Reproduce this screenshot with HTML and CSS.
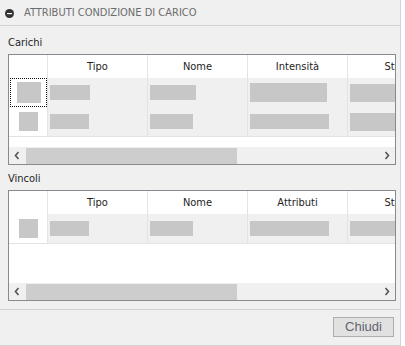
FILE: index.html
```html
<!DOCTYPE html>
<html>
<head>
    <meta charset="UTF-8">
    <title>Attributi condizione di carico</title>
    <link rel="stylesheet" href="styles.css">
</head>
<body>

<div class="panel">
    <div class="panel-head">
        <svg class="toggle" width="9" height="9" viewBox="0 0 9 9"><circle cx="4.5" cy="4.5" r="4.5" fill="#333"/><rect x="2" y="4" width="5" height="1.2" fill="#fff"/></svg>
        <span>ATTRIBUTI CONDIZIONE DI CARICO</span>
    </div>

    <div class="panel-body">
        <div class="label">Carichi</div>
        <div class="grid">
            <div class="grid-head">
                <div class="cell sel"></div>
                <div class="cell">Tipo</div>
                <div class="cell">Nome</div>
                <div class="cell">Intensità</div>
                <div class="cell">Stato</div>
            </div>
            <div class="grid-rows">
                <div class="grid-row">
                    <div class="cell sel"><div class="focus"><span class="ph ph-icon"></span></div></div>
                    <div class="cell"><span class="ph w40"></span></div>
                    <div class="cell"><span class="ph w46"></span></div>
                    <div class="cell"><span class="ph w77 tall"></span></div>
                    <div class="cell"><span class="ph w60 mid"></span></div>
                </div>
                <div class="grid-row">
                    <div class="cell sel"><span class="ph ph-sq"></span></div>
                    <div class="cell"><span class="ph w39"></span></div>
                    <div class="cell"><span class="ph w43"></span></div>
                    <div class="cell"><span class="ph w79"></span></div>
                    <div class="cell"><span class="ph w60 mid"></span></div>
                </div>
            </div>
            <div class="grid-space"></div>
            <div class="hscroll">
                <span class="arrow"><svg width="17" height="17" viewBox="0 0 17 17"><path d="M9.5 5 L6.5 8.5 L9.5 12" fill="none" stroke="#555" stroke-width="1.6"/></svg></span>
                <span class="thumb"></span>
                <span class="track"></span>
                <span class="arrow"><svg width="17" height="17" viewBox="0 0 17 17"><path d="M7.5 5 L10.5 8.5 L7.5 12" fill="none" stroke="#555" stroke-width="1.6"/></svg></span>
            </div>
        </div>

        <div class="label label-next">Vincoli</div>
        <div class="grid">
            <div class="grid-head">
                <div class="cell sel"></div>
                <div class="cell">Tipo</div>
                <div class="cell">Nome</div>
                <div class="cell">Attributi</div>
                <div class="cell">Stato</div>
            </div>
            <div class="grid-rows">
                <div class="grid-row">
                    <div class="cell sel"><span class="ph ph-sq"></span></div>
                    <div class="cell"><span class="ph w39"></span></div>
                    <div class="cell"><span class="ph w43"></span></div>
                    <div class="cell"><span class="ph w79"></span></div>
                    <div class="cell"><span class="ph w60"></span></div>
                </div>
            </div>
            <div class="grid-space"></div>
            <div class="hscroll">
                <span class="arrow"><svg width="17" height="17" viewBox="0 0 17 17"><path d="M9.5 5 L6.5 8.5 L9.5 12" fill="none" stroke="#555" stroke-width="1.6"/></svg></span>
                <span class="thumb"></span>
                <span class="track"></span>
                <span class="arrow"><svg width="17" height="17" viewBox="0 0 17 17"><path d="M7.5 5 L10.5 8.5 L7.5 12" fill="none" stroke="#555" stroke-width="1.6"/></svg></span>
            </div>
        </div>
    </div>

    <div class="panel-foot">
        <button class="btn">Chiudi</button>
    </div>
</div>

</body>
</html>
```

FILE: styles.css
```css
* {
    margin: 0;
    padding: 0;
    box-sizing: border-box;
}
body {
    width: 405px;
    height: 346px;
    background: #fff;
    font-family: "DejaVu Sans Condensed", "DejaVu Sans", sans-serif;
    font-size: 11px;
    color: #1e1e1e;
    overflow: hidden;
}
.panel {
    width: 401px;
    height: 346px;
    background: #f0f0f0;
    border-right: 1px solid #d2d2d2;
    border-bottom: 1px solid #d2d2d2;
    display: flex;
    flex-direction: column;
}
.panel-head {
    height: 26px;
    flex: 0 0 26px;
    border-bottom: 1px solid #d2d2d2;
    display: flex;
    align-items: center;
    padding-left: 5px;
    gap: 10px;
    color: #6c6c6c;
}
.toggle {
    display: block;
    margin-top: 1px;
}
.panel-body {
    flex: 1;
    padding: 10px 0 0 8px;
}
.label {
    line-height: 13px;
    height: 13px;
    margin-bottom: 5px;
}
.label-next {
    margin-top: 7px;
}

/* griglia */
.grid {
    width: 388px;
    height: 111px;
    border: 1px solid #868a91;
    background: #fff;
    display: flex;
    flex-direction: column;
    overflow: hidden;
}
.grid-head,
.grid-row {
    display: flex;
    overflow: hidden;
}
.grid-head {
    height: 23px;
    flex: 0 0 23px;
    line-height: 23px;
    text-align: center;
    white-space: nowrap;
}
.cell {
    flex: 0 0 100px;
    border-right: 1px solid #e3e3e3;
}
.cell.sel {
    flex-basis: 39px;
}
.grid-rows {
    border-bottom: 1px solid #e3e3e3;
}
.grid-row {
    height: 29px;
    background: #f0f0f0;
}
.grid-row .cell {
    display: flex;
    align-items: center;
    padding-left: 2px;
}
.grid-row .cell.sel {
    background: #fff;
    justify-content: center;
    padding-left: 0;
}
.focus {
    width: 37px;
    height: 29px;
    margin-left: 1px;
    border: 1px dotted #111;
    display: flex;
    align-items: center;
    justify-content: center;
}
.ph {
    display: block;
    height: 15px;
    background: #c6c7c6;
    flex-shrink: 0;
}
.ph-icon { width: 24px; height: 21px; }
.ph-sq { width: 19px; height: 19px; }
.w39 { width: 39px; }
.w40 { width: 40px; }
.w43 { width: 43px; }
.w46 { width: 46px; }
.w60 { width: 60px; }
.w77 { width: 77px; }
.w79 { width: 79px; }
.tall { height: 19px; }
.mid { height: 18px; }
.grid-space {
    flex: 1;
}

/* barra di scorrimento */
.hscroll {
    height: 17px;
    flex: 0 0 17px;
    display: flex;
    background: #f0f0f0;
}
.arrow {
    width: 17px;
    height: 17px;
    flex: 0 0 17px;
}
.arrow svg {
    display: block;
}
.thumb {
    width: 211px;
    background: #cdcdcd;
    margin-top: 1px;
}
.track {
    flex: 1;
}

/* piede */
.panel-foot {
    flex: 0 0 36px;
    border-top: 1px solid #d2d2d2;
    display: flex;
    justify-content: flex-end;
    align-items: flex-start;
    padding: 7px 6px 0 0;
}
.btn {
    width: 61px;
    height: 20px;
    background: #e1e1e1;
    border: 1px solid #adadad;
    font-family: "Liberation Sans", Arial, sans-serif;
    font-size: 13px;
    color: #62636e;
    line-height: 18px;
}
```
